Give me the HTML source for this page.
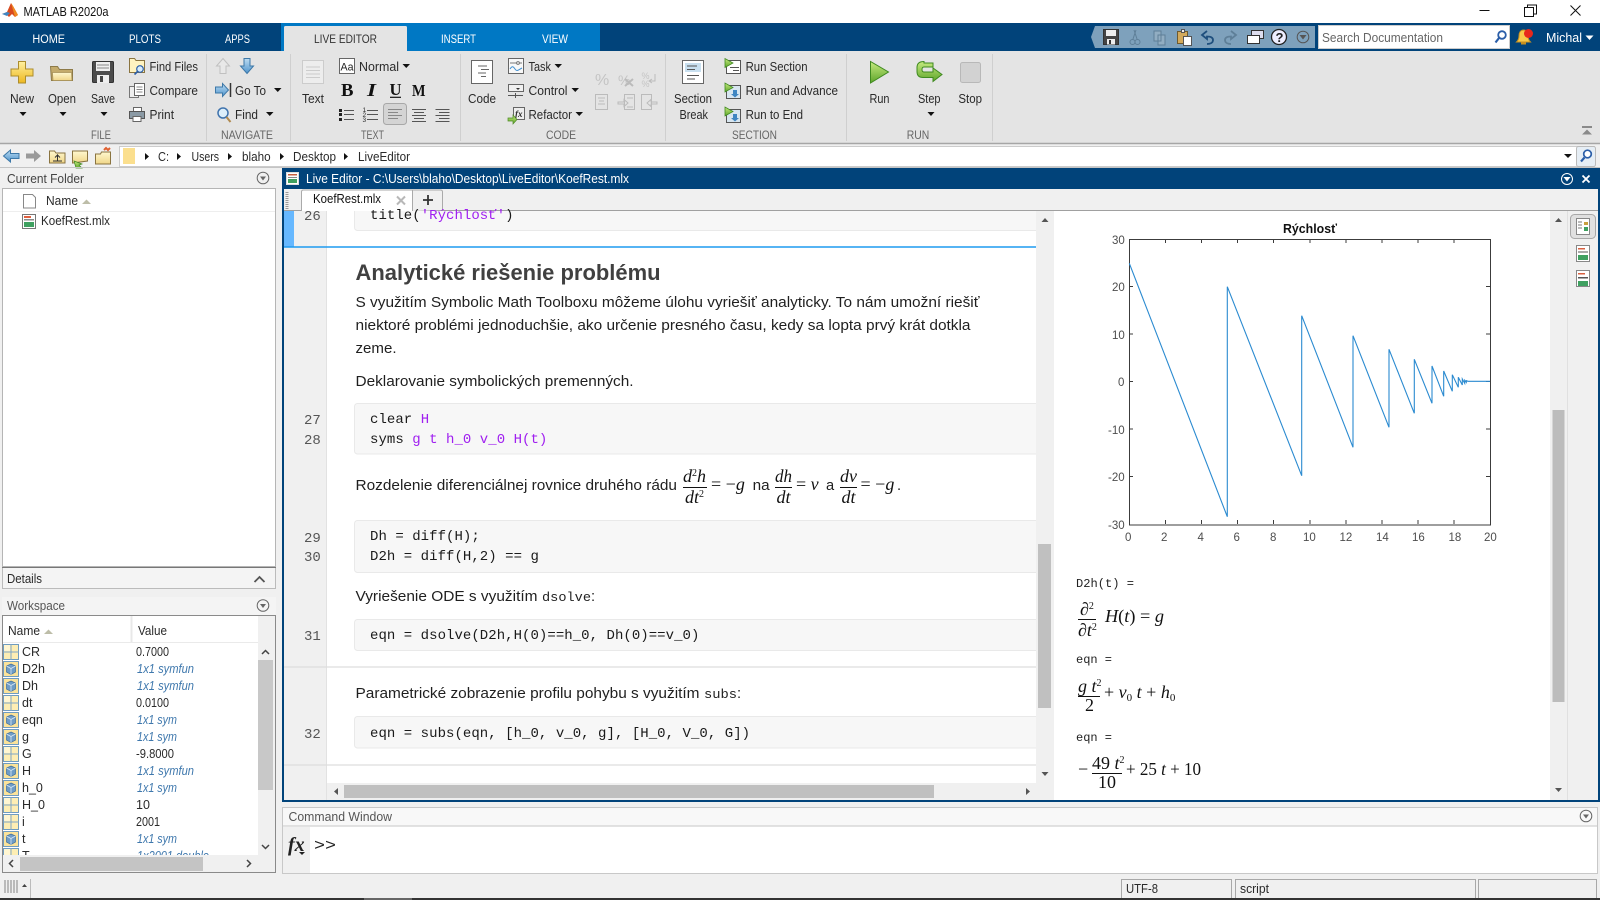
<!DOCTYPE html>
<html lang="en">
<head>
<meta charset="utf-8">
<title>MATLAB R2020a</title>
<style>
html,body{margin:0;padding:0;width:1600px;height:900px;overflow:hidden;background:#f0f0f0}
svg{display:block}
text{font-family:"Liberation Sans",sans-serif;font-size:12.5px;fill:#2a2a2a;white-space:pre}
.h{fill:#666;font-size:12px}
.w{fill:#fff}
.m{font-family:"Liberation Mono",monospace;font-size:14px;fill:#1a1a1a;letter-spacing:.045px}
.p{fill:#a020f0}
.n{font-family:"Liberation Mono",monospace;font-size:14px;fill:#555}
.b{font-size:14.7px;fill:#1f1f1f}
.o{font-family:"Liberation Mono",monospace;font-size:12px;fill:#222}
.s{font-family:"Liberation Serif",serif;font-size:18px;fill:#111}
.i{font-style:italic}
.v{font-style:italic;fill:#3f78ad}
.a{font-size:11.5px;fill:#4d4d4d}
.ic{fill:none;stroke:#555;stroke-width:1}
.pale{fill:none;stroke:#bbb;stroke-width:1}
</style>
</head>
<body>
<svg xmlns="http://www.w3.org/2000/svg" width="1600" height="900" viewBox="0 0 1600 900">
<defs>
<linearGradient id="yl" x1="0" y1="0" x2="0" y2="1"><stop offset="0" stop-color="#fff0a0"/><stop offset="1" stop-color="#eeb820"/></linearGradient>
<linearGradient id="fd" x1="0" y1="0" x2="0" y2="1"><stop offset="0" stop-color="#fff8d0"/><stop offset="1" stop-color="#f0d688"/></linearGradient>
<linearGradient id="gr" x1="0" y1="0" x2="0" y2="1"><stop offset="0" stop-color="#c6ea80"/><stop offset="1" stop-color="#5ea52a"/></linearGradient>
<linearGradient id="bl" x1="0" y1="0" x2="0" y2="1"><stop offset="0" stop-color="#bcdcf2"/><stop offset="1" stop-color="#4f94cc"/></linearGradient>
<clipPath id="wsclip"><rect x="3" y="644" width="255" height="211"/></clipPath>
<g id="grid"><rect x=".5" y=".5" width="15" height="15" fill="#fdeeb4" stroke="#6f9cc0"/><path d="M8 0v16M0 8h16" stroke="#7fa6c6" stroke-width="1"/><rect x="1" y="1" width="6" height="6" fill="#fff6d2"/></g>
<g id="cube"><rect x=".5" y=".5" width="15" height="15" fill="#fbe39a" stroke="#6f9cc0"/><path d="M8 3l4.5 2v6L8 13.500l-4.500-2.500v-6z" fill="#6f9cc6" stroke="#3f6f9c" stroke-width=".7"/><path d="M3.500 5L8 7.500 12.500 5M8 7.500v6" stroke="#d8e8f4" stroke-width=".8" fill="none"/></g>
<g id="dd"><circle cx="6.500" cy="6.500" r="5.800" fill="none" stroke="#666"/><path d="M3.500 5h6l-3 4z" fill="#666"/></g>
</defs>

<!-- window title -->
<rect width="1600" height="23" fill="#fff"/>
<path d="M2 14l5-2 4-9 2 3 5 9-3 2-3-3-3 3-3-3z" fill="#d84a20"/>
<path d="M2 14l5-2 3 1-3 3z" fill="#3f86c2"/>
<path d="M11 3l2 3 5 9-3 2z" fill="#f08a20"/>
<text x="23.500" y="16" textLength="85" lengthAdjust="spacingAndGlyphs" style="font-size:12.500px;fill:#111">MATLAB R2020a</text>
<path d="M1479.500 10.500h10" stroke="#111" stroke-width="1"/>
<path d="M1524.500 7.500h9v9h-9zM1527.500 7.500v-2.500h9v9h-3" fill="none" stroke="#111"/>
<path d="M1570.500 5.500l10 10M1580.500 5.500l-10 10" stroke="#111" stroke-width="1"/>

<!-- tab strip -->
<rect y="23" width="1600" height="28" fill="#01437a"/>
<rect x="281" y="23" width="319" height="28" fill="#0078c4"/>
<path d="M284 51V27.500q0-1.500 1.500-1.500h120q1.500 0 1.500 1.500V51z" fill="#e4e4e4"/>
<text class="w" x="32.400" y="43" textLength="32.600" lengthAdjust="spacingAndGlyphs" style="font-size:11.500px">HOME</text>
<text class="w" x="129" y="43" textLength="32" lengthAdjust="spacingAndGlyphs" style="font-size:11.500px">PLOTS</text>
<text class="w" x="225" y="43" textLength="25" lengthAdjust="spacingAndGlyphs" style="font-size:11.500px">APPS</text>
<text x="314" y="43" textLength="63" lengthAdjust="spacingAndGlyphs" style="font-size:11.500px;fill:#333">LIVE EDITOR</text>
<text class="w" x="441" y="43" textLength="35" lengthAdjust="spacingAndGlyphs" style="font-size:11.500px">INSERT</text>
<text class="w" x="542" y="43" textLength="26" lengthAdjust="spacingAndGlyphs" style="font-size:11.500px">VIEW</text>

<!-- quick access -->
<path d="M1091 37l4-11h220v22h-220z" fill="#7ea1bc"/>
<rect x="1103.500" y="29.500" width="15" height="15" fill="#444" stroke="#333"/><rect x="1106" y="30" width="10" height="6" fill="#eee"/><rect x="1107" y="39" width="8" height="5.500" fill="#eee"/><rect x="1109" y="40" width="2" height="4" fill="#333"/>
<path d="M1136 30l-3 9M1134 30l3 9" stroke="#5e7f98" fill="none"/><circle cx="1132.500" cy="42" r="2.500" fill="none" stroke="#5e7f98"/><circle cx="1137.500" cy="42" r="2.500" fill="none" stroke="#5e7f98"/>
<path d="M1154 31h7v10h-7zM1158 35h7v10h-7z" fill="#91adc2" stroke="#5e7f98"/>
<rect x="1177.500" y="31.500" width="10" height="12" fill="#d3aa5c" stroke="#6e5a30"/><rect x="1181.500" y="29.500" width="3" height="3" fill="#eee" stroke="#555"/><rect x="1183.500" y="36.500" width="8" height="9" fill="#fff" stroke="#555"/>
<path d="M1207 31l-5 4 5 4v-2.500c3 0 6 .5 6 3.500s-3 4-6 4" fill="none" stroke="#1f4f7d" stroke-width="1.800"/>
<path d="M1231 31l5 4-5 4v-2.500c-3 0-6 .5-6 3.500s3 4 6 4" fill="none" stroke="#5e7f98" stroke-width="1.800"/>
<path d="M1251.500 30.500h12v8h-12z" fill="#dde" stroke="#333"/><path d="M1247.500 35.500h12v8h-12z" fill="#fff" stroke="#333"/>
<circle cx="1279" cy="37" r="7.500" fill="#eef" stroke="#222" stroke-width="1.300"/><text x="1275.500" y="42" style="font-size:13px;font-weight:bold;fill:#222">?</text>
<circle cx="1303" cy="37" r="5.800" fill="none" stroke="#555"/><path d="M1299.500 35h7l-3.500 4.500z" fill="#555"/>
<rect x="1318.500" y="25.500" width="191" height="23" fill="#fff" stroke="#ccc"/>
<text x="1322" y="42" textLength="121" lengthAdjust="spacingAndGlyphs" style="font-size:13px;fill:#666">Search Documentation</text>
<circle cx="1502" cy="35" r="3.800" fill="#fff" stroke="#2b5ea8" stroke-width="1.800"/><path d="M1499 38l-3.500 4.500" stroke="#2b5ea8" stroke-width="2.200"/>
<path d="M1523.500 30c3 0 4.500 2.500 4.500 6 0 3 1 4.500 2.500 6h-14c1.500-1.500 2.500-3 2.500-6 0-3.500 1.500-6 4.500-6z" fill="#f8c94a" stroke="#c79020"/><path d="M1521 43.500h5" stroke="#c79020" stroke-width="2"/>
<circle cx="1528.500" cy="33.500" r="4.500" fill="#e8281c"/>
<text class="w" x="1546" y="42" textLength="36" lengthAdjust="spacingAndGlyphs" style="font-size:13px">Michal</text>
<path d="M1585.500 35.500h8l-4 4.500z" fill="#fff"/>

<!-- ribbon -->
<rect y="51" width="1600" height="92" fill="#e4e4e4"/>
<path d="M0 143.500h1600" stroke="#a6a6a6" stroke-width="1.500"/>
<g stroke="#cfcfcf"><path d="M206.500 54v87M290.500 54v87M460.500 54v87M665.500 54v87M846.500 54v87M992.500 54v87"/></g>

<!-- FILE -->
<path d="M18.500 61.500h7v7.500h7.500v7h-7.500v7h-7v-7h-7.500v-7h7.500z" fill="url(#yl)" stroke="#ad8d2c"/>
<path d="M51.500 80.500l-1-14h7l2 3h13v11z" fill="#c4ab6c" stroke="#8d7a48"/><path d="M53 80.500l-.5-8h19l.5 8z" fill="url(#fd)" stroke="#a69058" stroke-width=".7"/>
<rect x="92.500" y="61.500" width="21" height="21" rx="1" fill="#4c4c4c" stroke="#333"/><rect x="96" y="62" width="14" height="9" fill="#eee"/><path d="M97 65h12M97 68h12" stroke="#888"/><rect x="97" y="75" width="12" height="8" fill="#eee"/><rect x="100" y="76" width="3" height="6" fill="#444"/>
<text x="10" y="103" textLength="24" lengthAdjust="spacingAndGlyphs">New</text>
<text x="48" y="103" textLength="28" lengthAdjust="spacingAndGlyphs">Open</text>
<text x="91" y="103" textLength="24" lengthAdjust="spacingAndGlyphs">Save</text>
<path d="M19.500 112h7l-3.500 4zM59.500 112h7l-3.500 4zM100.500 112h7l-3.500 4z" fill="#111"/>
<path d="M129.500 72.500v-14h5l1.500 2h8.500v12z" fill="#fff3c0" stroke="#8a7440"/><circle cx="140" cy="69" r="3.300" fill="#d8ecfa" stroke="#2b5ea8" stroke-width="1.200"/><path d="M137.500 71.500l-3 3" stroke="#2b5ea8" stroke-width="1.600"/>
<rect x="129.500" y="86.500" width="9" height="11" fill="#eee" stroke="#777"/><rect x="134.500" y="83.500" width="10" height="12" fill="#fff" stroke="#666"/><path d="M136.500 87h6M136.500 89.500h6M136.500 92h6" stroke="#888"/>
<rect x="133.500" y="107.500" width="8" height="4" fill="#fff" stroke="#666"/><rect x="129.500" y="111.500" width="15" height="7" fill="#8b9aa5" stroke="#555"/><rect x="133" y="116.500" width="8" height="5" fill="#fff" stroke="#666"/>
<text x="149.500" y="71" textLength="48.500" lengthAdjust="spacingAndGlyphs">Find Files</text>
<text x="149.500" y="95" textLength="48.500" lengthAdjust="spacingAndGlyphs">Compare</text>
<text x="149.500" y="119" textLength="24.500" lengthAdjust="spacingAndGlyphs">Print</text>
<text class="h" x="91" y="139" textLength="20" lengthAdjust="spacingAndGlyphs">FILE</text>

<!-- NAVIGATE -->
<path d="M223 58.500l6.500 7.500h-3.500v7.500h-6v-7.500h-3.500z" fill="#e8e8e8" stroke="#c0c0c0"/>
<path d="M247 73.500l6.500-7.500h-3.500v-7.500h-6v7.500h-3.500z" fill="url(#bl)" stroke="#3d78a8"/>
<path d="M215.500 87h7v-3.500l6 6.500-6 6.500v-3.500h-7z" fill="url(#bl)" stroke="#3d78a8"/><path d="M230.500 83v14" stroke="#333" stroke-width="1.500"/>
<text x="235" y="95" textLength="31" lengthAdjust="spacingAndGlyphs">Go To</text>
<path d="M274 88h7.500l-3.750 4z" fill="#111"/>
<circle cx="223" cy="113" r="5" fill="#dceefa" stroke="#3f73ad" stroke-width="1.500"/><path d="M226.500 117l4 5" stroke="#b08a50" stroke-width="2"/>
<text x="235" y="119" textLength="23" lengthAdjust="spacingAndGlyphs">Find</text>
<path d="M266 112h7.500l-3.750 4z" fill="#111"/>
<text class="h" x="221" y="139" textLength="52" lengthAdjust="spacingAndGlyphs">NAVIGATE</text>

<!-- TEXT -->
<rect x="302.500" y="60.500" width="21" height="23" fill="#ededed" stroke="#ccc"/><path d="M306 67h14M306 70.500h14M306 74h14M306 77.500h14" stroke="#ccc"/>
<text x="302" y="103" textLength="22" lengthAdjust="spacingAndGlyphs">Text</text>
<rect x="339.500" y="58.500" width="15" height="15" fill="#fff" stroke="#666"/><text x="340.500" y="70.500" textLength="13" lengthAdjust="spacingAndGlyphs" style="font-size:11px;fill:#222">Aa</text>
<text x="359" y="71" textLength="40" lengthAdjust="spacingAndGlyphs">Normal</text>
<path d="M402.500 64h7.500l-3.750 4z" fill="#111"/>
<text x="341" y="96" style="font-family:'Liberation Serif',serif;font-size:18px;font-weight:bold;fill:#111" textLength="12.500" lengthAdjust="spacingAndGlyphs">B</text>
<text x="367" y="96" style="font-family:'Liberation Serif',serif;font-size:18px;font-weight:bold;font-style:italic;fill:#111" textLength="9" lengthAdjust="spacingAndGlyphs">I</text>
<text x="389.500" y="95" style="font-family:'Liberation Serif',serif;font-size:17px;font-weight:bold;fill:#111" textLength="12" lengthAdjust="spacingAndGlyphs">U</text><path d="M390 97.300h11" stroke="#111" stroke-width="1.200"/>
<text x="412" y="96" style="font-family:'Liberation Serif',serif;font-size:17px;font-weight:bold;fill:#111" textLength="13.500" lengthAdjust="spacingAndGlyphs">M</text>
<path d="M339 109h3v3h-3zM339 113h3v3h-3zM339 118h3v3h-3z" fill="#222"/>
<path d="M344 110.500h10M344 114.500h10M344 119.500h10" stroke="#555"/>
<text x="362.500" y="112" style="font-size:6.500px">1</text><text x="362.500" y="117" style="font-size:6.500px">2</text><text x="362.500" y="122" style="font-size:6.500px">3</text>
<path d="M367 110.500h11M367 114.500h11M367 119.500h11" stroke="#555"/>
<rect x="383.500" y="103.500" width="23" height="21" rx="3" fill="#d4d4d4" stroke="#a8a8a8"/>
<path d="M388 109.500h14M388 112.500h10M388 115.500h14M388 118.500h10" stroke="#888"/>
<path d="M412 109.500h14M414 112.500h10M412 115.500h14M414 118.500h10M412 121.500h14M435.500 109.500h14M439 112.500h10.500M435.500 115.500h14M439 118.500h10.500M435.500 121.500h14" stroke="#555"/>
<text class="h" x="361" y="139" textLength="23" lengthAdjust="spacingAndGlyphs">TEXT</text>

<!-- CODE -->
<rect x="471.500" y="60.500" width="21" height="23" fill="#fff" stroke="#666"/><path d="M478 66h9M481 69.500h8M478 73h8M481 76.500h5" stroke="#666"/>
<text x="468" y="103" textLength="28" lengthAdjust="spacingAndGlyphs">Code</text>
<rect x="508.500" y="58.500" width="15" height="15" fill="#f8f8f8" stroke="#666"/><path d="M510 69c2-3 3-3 5 0s3 1 7-1" stroke="#3f8ed0" fill="none"/><path d="M510 63h12" stroke="#777"/><circle cx="518" cy="63" r="1.400" fill="#fff" stroke="#777"/>
<rect x="508.500" y="84.500" width="15" height="7" fill="#f0f0f0" stroke="#666"/><path d="M516 88h4l-2 2z" fill="#333"/><path d="M508 95.500h15M515.500 93v5" stroke="#555"/>
<rect x="513.500" y="107.500" width="11" height="12" fill="#eee" stroke="#666"/><text x="515" y="117" style="font-family:'Liberation Serif',serif;font-size:9px;font-style:italic;font-weight:bold">fx</text><path d="M508 118h5v-3l4 4.500-4 4.500v-3h-5z" fill="url(#gr)" stroke="#4d8a24" stroke-width=".7"/>
<text x="528.500" y="71" textLength="22.500" lengthAdjust="spacingAndGlyphs">Task</text>
<text x="528.500" y="95" textLength="39" lengthAdjust="spacingAndGlyphs">Control</text>
<text x="528.500" y="119" textLength="43.500" lengthAdjust="spacingAndGlyphs">Refactor</text>
<path d="M554.500 64h7.500l-3.750 4zM571.500 88h7.500l-3.750 4zM575.500 112h7.500l-3.750 4z" fill="#111"/>
<text x="595" y="85" style="font-size:16px;fill:#c4c4c4">%</text>
<text x="618" y="85" style="font-size:14px;fill:#c4c4c4">%</text><path d="M625 79l8 7M633 79l-8 7" stroke="#bbb" stroke-width="2"/>
<text x="641.500" y="79" style="font-size:9px;fill:#c4c4c4">%</text><text x="641.500" y="87" style="font-size:9px;fill:#c4c4c4">%</text><path d="M655 74v7h-5M652 79l-3 2 3 2" class="pale"/>
<rect x="595.500" y="94.500" width="12" height="15" class="pale"/><path d="M598 98h7M599 101h5M598 104h7" class="pale"/>
<rect x="624.500" y="94.500" width="10" height="15" class="pale"/><path d="M618 102h6v-2.500l4 3.500-4 3.500v-2.500h-6zM627 98h6M627 107h6" class="pale"/>
<rect x="641.500" y="94.500" width="10" height="15" class="pale"/><path d="M657 102h-6v-2.500l-4 3.500 4 3.500v-2.500h6z" class="pale"/>
<text class="h" x="546" y="139" textLength="30" lengthAdjust="spacingAndGlyphs">CODE</text>

<!-- SECTION -->
<rect x="682.500" y="60.500" width="21" height="23" fill="#fff" stroke="#666"/><rect x="685" y="63" width="16" height="9" fill="#c9e0f0"/><path d="M687 66h10M687 69.500h8M687 75.500h12M687 79h8" stroke="#555"/>
<text x="674" y="103" textLength="38" lengthAdjust="spacingAndGlyphs">Section</text>
<text x="679.500" y="119" textLength="28.500" lengthAdjust="spacingAndGlyphs">Break</text>
<rect x="726.500" y="60.500" width="14" height="13" fill="#fff" stroke="#555"/><path d="M730 67.500h9M733 70.500h6" stroke="#555"/><path d="M725 58.500v9l8-4.500z" fill="url(#gr)" stroke="#3f8a20" stroke-width=".8"/>
<rect x="726.500" y="85.500" width="14" height="13" fill="#d8e6f0" stroke="#555"/><path d="M725 83v9l8-4.500z" fill="url(#gr)" stroke="#3f8a20" stroke-width=".8"/><path d="M733 90h4v4h2l-4 3.500-4-3.500h2z" fill="#3f86c2"/>
<rect x="726.500" y="109.500" width="14" height="13" fill="#d8e6f0" stroke="#555"/><path d="M725 107v9l8-4.500z" fill="url(#gr)" stroke="#3f8a20" stroke-width=".8"/><path d="M733 114h4v4h2l-4 3.500-4-3.500h2z" fill="#3f86c2"/>
<text x="745.600" y="71" textLength="62" lengthAdjust="spacingAndGlyphs">Run Section</text>
<text x="745.600" y="95" textLength="92.400" lengthAdjust="spacingAndGlyphs">Run and Advance</text>
<text x="745.600" y="119" textLength="57.400" lengthAdjust="spacingAndGlyphs">Run to End</text>
<text class="h" x="732" y="139" textLength="45" lengthAdjust="spacingAndGlyphs">SECTION</text>

<!-- RUN -->
<path d="M870.500 61.500v21.500l18-11z" fill="url(#gr)" stroke="#3f8a20"/>
<path d="M924 63h9v4h-9q-2 0-2 2.500t2 2.500h9v-4l9 6.500-9 7v-4h-10q-6 0-6-6v-4q0-6 7-6z" fill="url(#gr)" stroke="#3f8a20"/>
<text x="869.500" y="103" textLength="20" lengthAdjust="spacingAndGlyphs">Run</text>
<text x="918" y="103" textLength="22.500" lengthAdjust="spacingAndGlyphs">Step</text>
<text x="958.400" y="103" textLength="23.600" lengthAdjust="spacingAndGlyphs">Stop</text>
<path d="M927.500 112h7l-3.500 4z" fill="#111"/>
<rect x="960.500" y="62.500" width="20" height="20" rx="2" fill="#d2d2d2" stroke="#b8b8b8"/>
<text class="h" x="906.700" y="139" textLength="22.500" lengthAdjust="spacingAndGlyphs">RUN</text>
<path d="M1582 126h10v2h-10zM1587 129.500l5 5h-10z" fill="#8a8a8a"/>

<!-- address bar -->
<rect y="145" width="1600" height="23" fill="#f0f0f0"/>
<path d="M3.500 156l7-6v3.500h8.500v5h-8.500v3.500z" fill="url(#bl)" stroke="#3d78a8"/>
<path d="M41 156l-7-6v3.500h-8v5h8v3.500z" fill="#9a9a9a"/>
<path d="M49.500 163v-12h5l1.500 2h9v10z" fill="url(#fd)" stroke="#8a7440"/><path d="M57.500 161v-6l-2.500 2.500M57.500 155l2.500 2.500M53 161h9" stroke="#333" fill="none"/>
<path d="M72.500 163v-12h15v10z" fill="url(#fd)" stroke="#8a7440"/><path d="M76 168l-2-7 8 3-3 1 3 3z" fill="url(#gr)" stroke="#3f8a20" stroke-width=".7"/>
<path d="M95.500 164v-10h5l1-2h9v12z" fill="url(#fd)" stroke="#8a7440"/><path d="M104 150l2-2 2 2 2-2" stroke="#e06030" stroke-width="2" fill="none"/>
<rect x="119.500" y="146.500" width="1475" height="20" fill="#fff" stroke="#ccc"/>
<rect x="123" y="148" width="12" height="16" fill="#fbdf8e"/>
<path d="M145 153l4 3.500-4 3.500zM177 153l4 3.500-4 3.500zM228 153l4 3.500-4 3.500zM280 153l4 3.500-4 3.500zM344 153l4 3.500-4 3.500z" fill="#111"/>
<text x="158" y="161" textLength="11" lengthAdjust="spacingAndGlyphs">C:</text>
<text x="191.500" y="161" textLength="27.500" lengthAdjust="spacingAndGlyphs">Users</text>
<text x="242" y="161" textLength="28.600" lengthAdjust="spacingAndGlyphs">blaho</text>
<text x="293" y="161" textLength="43" lengthAdjust="spacingAndGlyphs">Desktop</text>
<text x="358" y="161" textLength="52" lengthAdjust="spacingAndGlyphs">LiveEditor</text>
<path d="M1564 154h8l-4 4z" fill="#111"/>
<rect x="1576.500" y="146.500" width="19" height="20" rx="2" fill="#e6eef5" stroke="#bbb"/>
<circle cx="1587.500" cy="154" r="3.800" fill="#fff" stroke="#2b5ea8" stroke-width="1.700"/><path d="M1584.500 157.500l-3.500 4" stroke="#2b5ea8" stroke-width="2.200"/>
<path d="M0 167.500h1600" stroke="#c4c4c4"/>

<!-- Current Folder -->
<rect x="2" y="169" width="274" height="19" fill="#f0f0f0"/>
<text x="7" y="183" textLength="77" lengthAdjust="spacingAndGlyphs" style="fill:#444">Current Folder</text>
<use href="#dd" x="256.500" y="171.500"/>
<rect x="2.500" y="188.500" width="273" height="378" fill="#fff" stroke="#b5b5b5"/>
<path d="M3 211.500h272" stroke="#eee"/>
<path d="M23.500 194.500h9l3 3v10.500h-12z" fill="#fff" stroke="#888"/>
<text x="46" y="205" textLength="32" lengthAdjust="spacingAndGlyphs">Name</text>
<path d="M82 204l4.500-4.500 4.500 4.500z" fill="#bdbda8"/>
<rect x="22.500" y="214.500" width="13" height="14" fill="#fff" stroke="#777"/><rect x="24" y="222" width="10" height="5" fill="#3fa060"/><rect x="24" y="216" width="7" height="2" fill="#e06040"/><rect x="24" y="219" width="10" height="1.500" fill="#888"/>
<text x="41" y="225" textLength="69" lengthAdjust="spacingAndGlyphs">KoefRest.mlx</text>

<!-- Details -->
<rect x="2.500" y="567.500" width="273" height="21" fill="#f4f4f4" stroke="#bbb"/>
<path d="M2 567.500h274" stroke="#777"/>
<text x="7" y="583" textLength="35" lengthAdjust="spacingAndGlyphs">Details</text>
<path d="M254.500 582l5-5 5 5" fill="none" stroke="#555" stroke-width="1.800"/>

<!-- Workspace -->
<rect x="2" y="597" width="274" height="18" fill="#f4f4f4"/>
<text x="7" y="610" textLength="58" lengthAdjust="spacingAndGlyphs" style="fill:#555">Workspace</text>
<use href="#dd" x="256.500" y="599"/>
<rect x="2.500" y="615.500" width="273" height="257" fill="#f0f0f0" stroke="#8a8a8a"/>
<rect x="3" y="616" width="255" height="239" fill="#fff"/>
<path d="M3 642.500h255" stroke="#eaeaea"/>
<path d="M131.500 616v26" stroke="#e8e8e8" stroke-width="2"/>
<text x="8" y="635" textLength="32" lengthAdjust="spacingAndGlyphs">Name</text>
<path d="M44 634l4.500-4.500 4.500 4.500z" fill="#bdbda8"/>
<text x="138" y="635" textLength="29" lengthAdjust="spacingAndGlyphs">Value</text>
<g clip-path="url(#wsclip)">
<use href="#grid" x="3" y="644"/><text x="22" y="656">CR</text><text x="136" y="656" textLength="33" lengthAdjust="spacingAndGlyphs">0.7000</text>
<use href="#cube" x="3" y="661"/><text x="22" y="673">D2h</text><text class="v" x="137" y="673" textLength="57" lengthAdjust="spacingAndGlyphs">1x1 symfun</text>
<use href="#cube" x="3" y="678"/><text x="22" y="690">Dh</text><text class="v" x="137" y="690" textLength="57" lengthAdjust="spacingAndGlyphs">1x1 symfun</text>
<use href="#grid" x="3" y="695"/><text x="22" y="707">dt</text><text x="136" y="707" textLength="33" lengthAdjust="spacingAndGlyphs">0.0100</text>
<use href="#cube" x="3" y="712"/><text x="22" y="724">eqn</text><text class="v" x="137" y="724" textLength="40" lengthAdjust="spacingAndGlyphs">1x1 sym</text>
<use href="#cube" x="3" y="729"/><text x="22" y="741">g</text><text class="v" x="137" y="741" textLength="40" lengthAdjust="spacingAndGlyphs">1x1 sym</text>
<use href="#grid" x="3" y="746"/><text x="22" y="758">G</text><text x="136" y="758" textLength="38" lengthAdjust="spacingAndGlyphs">-9.8000</text>
<use href="#cube" x="3" y="763"/><text x="22" y="775">H</text><text class="v" x="137" y="775" textLength="57" lengthAdjust="spacingAndGlyphs">1x1 symfun</text>
<use href="#cube" x="3" y="780"/><text x="22" y="792">h_0</text><text class="v" x="137" y="792" textLength="40" lengthAdjust="spacingAndGlyphs">1x1 sym</text>
<use href="#grid" x="3" y="797"/><text x="22" y="809">H_0</text><text x="136" y="809">10</text>
<use href="#grid" x="3" y="814"/><text x="22" y="826">i</text><text x="136" y="826" textLength="24" lengthAdjust="spacingAndGlyphs">2001</text>
<use href="#cube" x="3" y="831"/><text x="22" y="843">t</text><text class="v" x="137" y="843" textLength="40" lengthAdjust="spacingAndGlyphs">1x1 sym</text>
<use href="#grid" x="3" y="848"/><text x="22" y="860">T</text><text class="v" x="137" y="860" textLength="72" lengthAdjust="spacingAndGlyphs">1x2001 double</text>
</g>
<rect x="258" y="616" width="17" height="256" fill="#f0f0f0"/>
<rect x="258" y="660" width="15" height="130" fill="#c8c8c8"/>
<path d="M262 654l3.500-3.500 3.500 3.500M262 845l3.500 3.500 3.500-3.500" fill="none" stroke="#444" stroke-width="1.500"/>
<rect x="20" y="857" width="183" height="14" fill="#c4c4c4"/>
<path d="M13 860l-3.500 3.500 3.500 3.500M247 860l3.500 3.500-3.500 3.500" fill="none" stroke="#444" stroke-width="1.500"/>

<!-- Editor window -->
<rect x="282" y="168" width="1318" height="634" fill="#01437a"/>
<rect x="284" y="189" width="1314" height="611" fill="#fff"/>
<rect x="286.500" y="172.500" width="12" height="12" fill="#fff" stroke="#ddd"/><rect x="288" y="174" width="9" height="1.500" fill="#c86040"/><rect x="288" y="177" width="9" height="1" fill="#888"/><rect x="288" y="179" width="9" height="4" fill="#3fa060"/>
<text class="w" x="306" y="183" textLength="323" lengthAdjust="spacingAndGlyphs">Live Editor - C:\Users\blaho\Desktop\LiveEditor\KoefRest.mlx</text>
<circle cx="1567" cy="179" r="5.500" fill="none" stroke="#fff"/><path d="M1563.500 177h7l-3.500 4.500z" fill="#fff"/>
<path d="M1582.500 175.500l7 7M1589.500 175.500l-7 7" stroke="#fff" stroke-width="1.800"/>

<!-- gutter -->
<rect x="284" y="211" width="43" height="589" fill="#f0f0f0"/>
<path d="M326.500 211v589" stroke="#e2e2e2"/>
<rect x="284" y="211" width="10" height="36" fill="#66b8ff"/>
<path d="M284 247h752" stroke="#1e9bf0" stroke-width="1.400"/>
<path d="M284 667h752M284 765h752" stroke="#ddd" stroke-width="1.200"/>

<!-- code blocks -->
<g fill="#f7f7f7" stroke="#e9e9e9">
<rect x="354.500" y="204" width="700" height="26.500" rx="3"/>
<rect x="354.500" y="403.500" width="700" height="50.500" rx="3"/>
<rect x="354.500" y="520.500" width="700" height="52" rx="3"/>
<rect x="354.500" y="619.500" width="700" height="31" rx="3"/>
<rect x="354.500" y="716.500" width="700" height="31.500" rx="3"/>
</g>

<!-- editor tabs -->
<rect x="284" y="189" width="1314" height="21" fill="#f0f0f0"/>
<path d="M284 210.500h1314" stroke="#a0a0a0"/>
<path d="M301.500 211v-19q0-2 2-2h109v21" fill="#fff" stroke="#aaa"/>
<path d="M412.500 211v-21h28q2 0 2 2v18" fill="#f0f0f0" stroke="#aaa"/>
<text x="313" y="203" textLength="68" lengthAdjust="spacingAndGlyphs" style="fill:#111">KoefRest.mlx</text>
<path d="M397 196.500l8 8M405 196.500l-8 8" stroke="#b8b8b8" stroke-width="2"/>
<path d="M423 200h10M428 195v10" stroke="#333" stroke-width="1.800"/>
<path d="M287 192v17" stroke="#9a9a9a" stroke-width="3" stroke-dasharray="1 1"/>

<text class="n" x="304" y="220">26</text>
<text class="m" x="370" y="219">title(<tspan class="p">'Rýchlosť'</tspan>)</text>
<text x="355.500" y="280" textLength="305" lengthAdjust="spacingAndGlyphs" style="font-size:22px;font-weight:bold;fill:#404040">Analytické riešenie problému</text>
<text class="b" x="355.500" y="307" textLength="624" lengthAdjust="spacingAndGlyphs">S využitím Symbolic Math Toolboxu môžeme úlohu vyriešiť analyticky. To nám umožní riešiť</text>
<text class="b" x="355.500" y="330" textLength="615" lengthAdjust="spacingAndGlyphs">niektoré problémi jednoduchšie, ako určenie presného času, kedy sa lopta prvý krát dotkla</text>
<text class="b" x="355.500" y="353" textLength="41" lengthAdjust="spacingAndGlyphs">zeme.</text>
<text class="b" x="355.500" y="386" textLength="278" lengthAdjust="spacingAndGlyphs">Deklarovanie symbolických premenných.</text>
<text class="n" x="304" y="424">27</text>
<text class="n" x="304" y="444">28</text>
<text class="m" x="370" y="423">clear <tspan class="p">H</tspan></text>
<text class="m" x="370" y="443">syms <tspan class="p">g t h_0 v_0 H(t)</tspan></text>

<text class="b" x="355.500" y="490" textLength="321.500" lengthAdjust="spacingAndGlyphs">Rozdelenie diferenciálnej rovnice druhého rádu</text>
<text class="s i" x="683" y="482">d<tspan font-size="10" dy="-6" font-style="normal">2</tspan><tspan dy="6">h</tspan></text>
<path d="M683 487.500h24" stroke="#111"/>
<text class="s i" x="685" y="503">dt<tspan font-size="10" dy="-6" font-style="normal">2</tspan></text>
<text class="s" x="711" y="490">= −<tspan class="i">g</tspan></text>
<text class="b" x="752.600" y="490" textLength="17" lengthAdjust="spacingAndGlyphs">na</text>
<text class="s i" x="775" y="482" textLength="17" lengthAdjust="spacingAndGlyphs">dh</text>
<path d="M775 487.500h17" stroke="#111"/>
<text class="s i" x="776.500" y="503">dt</text>
<text class="s" x="796" y="490">= <tspan class="i">v</tspan></text>
<text class="b" x="826" y="490">a</text>
<text class="s i" x="840" y="482" textLength="17" lengthAdjust="spacingAndGlyphs">dv</text>
<path d="M840 487.500h17" stroke="#111"/>
<text class="s i" x="841.500" y="503">dt</text>
<text class="s" x="860.500" y="490">= −<tspan class="i">g</tspan></text>
<text class="b" x="897" y="490">.</text>

<text class="n" x="304" y="542">29</text>
<text class="n" x="304" y="561">30</text>
<text class="m" x="370" y="540">Dh = diff(H);</text>
<text class="m" x="370" y="560">D2h = diff(H,2) == g</text>
<text class="b" x="355.500" y="601" textLength="182" lengthAdjust="spacingAndGlyphs">Vyriešenie ODE s využitím</text>
<text class="o" x="542" y="601" textLength="49" lengthAdjust="spacingAndGlyphs" style="font-size:13px">dsolve</text>
<text class="b" x="591" y="601">:</text>
<text class="n" x="304" y="640">31</text>
<text class="m" x="370" y="639">eqn = dsolve(D2h,H(0)==h_0, Dh(0)==v_0)</text>
<text class="b" x="355.500" y="698" textLength="344" lengthAdjust="spacingAndGlyphs">Parametrické zobrazenie profilu pohybu s využitím</text>
<text class="o" x="704" y="698" textLength="33" lengthAdjust="spacingAndGlyphs" style="font-size:13px">subs</text>
<text class="b" x="737" y="698">:</text>
<text class="n" x="304" y="738">32</text>
<text class="m" x="370" y="737">eqn = subs(eqn, [h_0, v_0, g], [H_0, V_0, G])</text>

<!-- editor scrollbars -->
<rect x="1036" y="211" width="18" height="589" fill="#f0f0f0"/>
<rect x="1038" y="544" width="13" height="164" fill="#c0c0c0"/>
<path d="M1041.500 222h7l-3.500-4zM1041.500 772h7l-3.500 4z" fill="#555"/>
<rect x="327" y="783" width="709" height="17" fill="#f0f0f0"/>
<rect x="344" y="785" width="590" height="13" fill="#c0c0c0"/>
<path d="M338 788v7l-4-3.500zM1026 788v7l4-3.500z" fill="#555"/>

<!-- output pane -->
<rect x="1054" y="211" width="496" height="589" fill="#fff"/>
<rect x="1550" y="211" width="17" height="589" fill="#f0f0f0"/>
<rect x="1552.500" y="410" width="12" height="292" fill="#bcbcbc"/>
<path d="M1555 222h7l-3.500-4zM1555 788h7l-3.500 4z" fill="#555"/>
<rect x="1567" y="211" width="31" height="589" fill="#f0f0f0"/>
<path d="M1567.500 211v589" stroke="#e0e0e0"/>
<rect x="1570.500" y="214.500" width="25" height="24" rx="4" fill="#e0e0e0" stroke="#a8a8a8"/>
<rect x="1576.500" y="218.500" width="13" height="16" fill="#fff" stroke="#888"/><path d="M1578 222h4M1578 225h4M1578 228h4" stroke="#777"/><rect x="1584" y="222" width="4" height="3" fill="#c8a040"/><rect x="1584" y="227" width="4" height="4" fill="#3fa060"/>
<rect x="1576.500" y="245.500" width="13" height="16" fill="#fff" stroke="#888"/><rect x="1578" y="248" width="7" height="1.500" fill="#d86040"/><rect x="1578" y="251" width="10" height="2" fill="#aaa"/><rect x="1578" y="255" width="10" height="5" fill="#3fa060"/>
<rect x="1576.500" y="270.500" width="13" height="16" fill="#fff" stroke="#888"/><rect x="1578" y="273" width="7" height="1.500" fill="#d86040"/><rect x="1578" y="277" width="10" height="1.500" fill="#555"/><rect x="1578" y="281" width="10" height="5" fill="#3fa060"/>

<!-- chart -->
<text x="1283" y="233" textLength="54" lengthAdjust="spacingAndGlyphs" style="font-size:13px;font-weight:bold;fill:#111">Rýchlosť</text>
<rect x="1129.500" y="239.500" width="361" height="285.500" fill="#fff" stroke="#3c3c3c"/>
<path d="M1165.500 239v4M1201.500 239v4M1237.500 239v4M1273.500 239v4M1310 239v4M1346 239v4M1382 239v4M1418 239v4M1454 239v4M1165.500 524v-4M1201.500 524v-4M1237.500 524v-4M1273.500 524v-4M1310 524v-4M1346 524v-4M1382 524v-4M1418 524v-4M1454 524v-4" stroke="#3c3c3c"/>
<path d="M1129 286.500h4M1129 334h4M1129 381.500h4M1129 429h4M1129 476.500h4M1490 286.500h-4M1490 334h-4M1490 381.500h-4M1490 429h-4M1490 476.500h-4" stroke="#3c3c3c"/>
<path d="M1129.300 263.300L1227.300 516.700V286.700L1301.700 475.700V315.700L1353 447.300V335.700L1389 427.300V349.300L1414.300 413.300V359.300L1432 403.300V366L1443.700 396.300V371L1452.300 391.300V374.700L1458.300 387.300V377.300L1462.300 385V379L1464.700 383.300V380.300L1466.300 382.300V380.700L1468 381.300H1490" fill="none" stroke="#2a8ad0" stroke-width="1.100"/>
<text class="a" x="1112" y="244">30</text><text class="a" x="1112" y="291">20</text><text class="a" x="1112" y="339">10</text><text class="a" x="1118" y="386">0</text><text class="a" x="1108" y="434">-10</text><text class="a" x="1108" y="481">-20</text><text class="a" x="1108" y="529">-30</text>
<text class="a" x="1125" y="541">0</text><text class="a" x="1161" y="541">2</text><text class="a" x="1197.500" y="541">4</text><text class="a" x="1233.500" y="541">6</text><text class="a" x="1270" y="541">8</text><text class="a" x="1303" y="541">10</text><text class="a" x="1339.500" y="541">12</text><text class="a" x="1376" y="541">14</text><text class="a" x="1412" y="541">16</text><text class="a" x="1448.500" y="541">18</text><text class="a" x="1484" y="541">20</text>

<!-- outputs -->
<text class="o" x="1076" y="587" textLength="58" lengthAdjust="spacingAndGlyphs">D2h(t) =</text>
<text class="s i" x="1080" y="615">∂<tspan font-size="10" dy="-6" font-style="normal">2</tspan></text>
<path d="M1078 619.500h18" stroke="#111"/>
<text class="s i" x="1078" y="636">∂t<tspan font-size="10" dy="-6" font-style="normal">2</tspan></text>
<text class="s" x="1105" y="622" textLength="59" lengthAdjust="spacingAndGlyphs"><tspan class="i">H</tspan>(<tspan class="i">t</tspan>) = <tspan class="i">g</tspan></text>
<text class="o" x="1076" y="663" textLength="36" lengthAdjust="spacingAndGlyphs">eqn =</text>
<text class="s i" x="1078" y="692">g t<tspan font-size="10" dy="-6" font-style="normal">2</tspan></text>
<path d="M1078 696.500h22" stroke="#111"/>
<text class="s" x="1085" y="711">2</text>
<text class="s" x="1104" y="698">+ <tspan class="i">v</tspan><tspan font-size="11" dy="3">0</tspan><tspan class="i" dy="-3"> t</tspan> + <tspan class="i">h</tspan><tspan font-size="11" dy="3">0</tspan></text>
<text class="o" x="1076" y="741" textLength="36" lengthAdjust="spacingAndGlyphs">eqn =</text>
<text class="s" x="1078" y="775">−</text>
<text class="s" x="1092" y="769">49 <tspan class="i">t</tspan><tspan font-size="10" dy="-6">2</tspan></text>
<path d="M1092 773.500h30" stroke="#111"/>
<text class="s" x="1098" y="788">10</text>
<text class="s" x="1126" y="775" textLength="75" lengthAdjust="spacingAndGlyphs">+ 25 <tspan class="i">t</tspan> + 10</text>

<path d="M282 801h1318" stroke="#01437a" stroke-width="2"/>

<!-- Command Window -->
<rect x="282" y="802" width="1318" height="5" fill="#f0f0f0"/>
<rect x="282.500" y="807.500" width="1315" height="66" fill="#fff" stroke="#c8c8c8"/>
<rect x="283" y="808" width="1314" height="18" fill="#f8f8f8"/>
<path d="M283 826h1314" stroke="#d8d8d8" stroke-width="1.500"/>
<text x="288.500" y="821" textLength="103.500" lengthAdjust="spacingAndGlyphs" style="fill:#555">Command Window</text>
<use href="#dd" x="1579.500" y="809.500"/>
<rect x="283" y="827" width="27" height="46" fill="#f0f0f0"/>
<text x="288" y="851" style="font-family:'Liberation Serif',serif;font-size:20px;font-style:italic;font-weight:bold;fill:#222">fx</text>
<path d="M299 852h6l-3 3z" fill="#222"/>
<text x="314" y="850" textLength="22" lengthAdjust="spacingAndGlyphs" style="font-family:'Liberation Mono',monospace;font-size:16px;fill:#222">&gt;&gt;</text>

<!-- status bar -->
<rect y="874" width="1600" height="24" fill="#f0f0f0"/>
<path d="M5 880v13M8 880v13M11 880v13M14 880v13M17 880v13" stroke="#a8a8a8" stroke-width="1.500"/>
<path d="M22 887h5l-2.500-3z" fill="#444"/>
<path d="M30.500 879v19" stroke="#bbb"/>
<path d="M1121.500 898v-18.500h110v18.500M1235.500 898v-18.500h240v18.500M1478.500 898v-18.500h118v18.500" fill="none" stroke="#a8a8a8"/>
<text x="1126" y="893" textLength="32" lengthAdjust="spacingAndGlyphs">UTF-8</text>
<text x="1240" y="893" textLength="29" lengthAdjust="spacingAndGlyphs">script</text>
<rect y="898" width="1600" height="2" fill="#333"/>
<rect x="364" y="898" width="48" height="2" fill="#666"/>
</svg>
</body>
</html>
